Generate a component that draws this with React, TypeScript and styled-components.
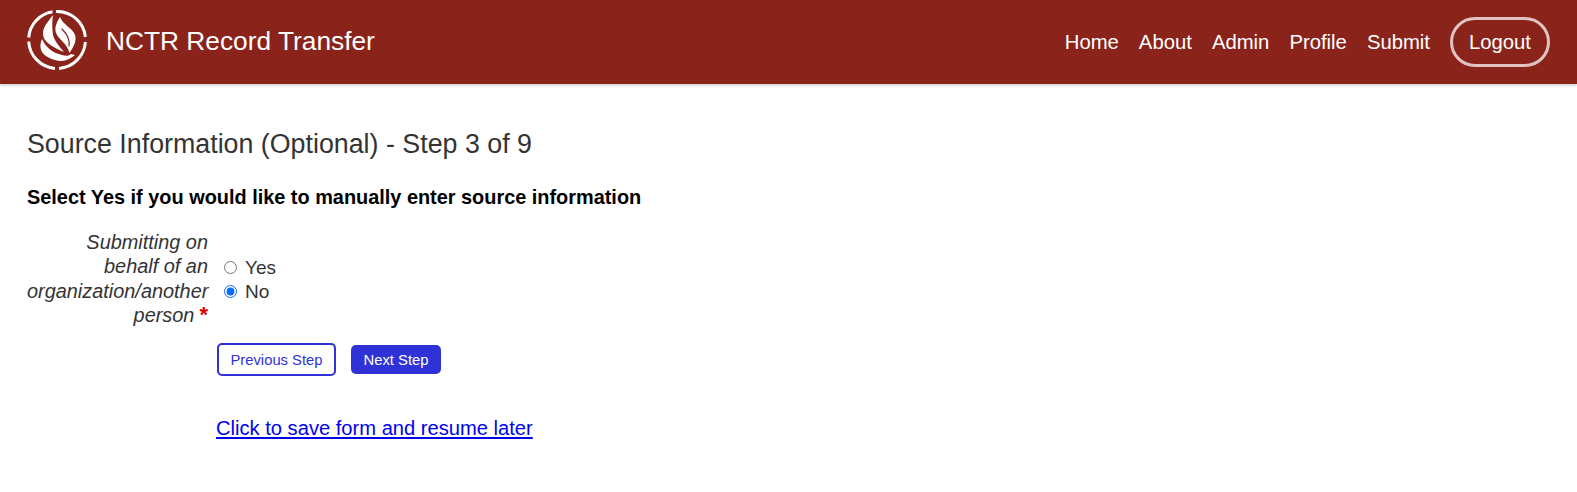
import React from "react";
import styled, { createGlobalStyle } from "styled-components";

const Global = createGlobalStyle`
  html, body { margin: 0; padding: 0; background: #fff; }
  body { font-family: "Liberation Sans", Arial, sans-serif; color: #212529; }
`;

const Header = styled.header`
  height: 84px;
  background: #8a231a;
  box-shadow: 0 1px 3px rgba(0, 0, 0, 0.25);
  display: flex;
  align-items: center;
  justify-content: space-between;
  padding: 0 27px;
`;

const Brand = styled.a`
  display: flex;
  align-items: center;
  gap: 19px;
  padding-bottom: 2px;
  color: #fff;
  font-size: 26.3px;
  text-decoration: none;
`;

const LogoMark = styled.svg`
  display: block;
  flex: none;
  margin-bottom: 2px;
`;

const Nav = styled.nav`
  display: flex;
  align-items: center;
  gap: 20px;
`;

const NavLink = styled.a`
  color: #fff;
  font-size: 20.3px;
  text-decoration: none;
`;

const LogoutLink = styled(NavLink)`
  display: block;
  width: 100px;
  height: 50px;
  line-height: 45px;
  text-align: center;
  box-sizing: border-box;
  border: 3px solid #dfc4c1;
  border-radius: 25px;
`;

const Main = styled.main`
  padding: 45px 27px 0;
`;

const Title = styled.h2`
  margin: 0 0 26px;
  font-size: 26.8px;
  line-height: 31px;
  font-weight: 400;
  color: #333;
`;

const Lead = styled.p`
  margin: 0 0 21px;
  font-size: 19.9px;
  line-height: 23px;
  font-weight: 700;
  color: #000;
`;

const FormRow = styled.div`
  display: grid;
  grid-template-columns: 181px 1fr;
  column-gap: 16px;
  align-items: center;
`;

const FieldLabel = styled.label`
  font-size: 19.9px;
  line-height: 24.3px;
  font-style: italic;
  text-align: right;
  color: #333;
`;

const Required = styled.span`
  display: inline-block;
  margin-left: 5px;
  font-size: 22px;
  line-height: 20px;
  color: #e00000;
  font-weight: 700;
  font-style: normal;
`;

const Options = styled.div`
  display: flex;
  flex-direction: column;
  padding-top: 2px;
`;

const Option = styled.label`
  display: flex;
  align-items: center;
  gap: 8px;
  font-size: 19px;
  line-height: 23.5px;
  color: #333;
`;

const Radio = styled.input`
  margin: 0;
  width: 13px;
  height: 13px;
  accent-color: #0a6cff;
`;

const Actions = styled.div`
  display: flex;
  flex-direction: column;
  align-items: flex-start;
  margin: 16px 0 0 190px;
`;

const Buttons = styled.div`
  display: flex;
  align-items: center;
  gap: 15px;
`;

const Button = styled.button<{ $primary?: boolean }>`
  font-family: inherit;
  font-size: 14.8px;
  border-radius: 5px;
  box-sizing: border-box;
  padding: 0;
  color: ${(p) => (p.$primary ? "#fff" : "#2f32d6")};
  background: ${(p) => (p.$primary ? "#2f32d6" : "#fff")};
  border: ${(p) => (p.$primary ? "none" : "2px solid #2f32d6")};
  width: ${(p) => (p.$primary ? "90px" : "119px")};
  height: ${(p) => (p.$primary ? "29px" : "33px")};
`;

const SaveLink = styled.a`
  margin: 40px 0 0 -1px;
  font-size: 20.15px;
  line-height: 24px;
  color: #0000ee;
  text-decoration: underline;
`;

const Logo = () => (
  <LogoMark width="60" height="60" viewBox="0 0 60 60" fill="none" aria-hidden="true">
    <g stroke="#fff" strokeWidth="3">
      <path d="M1.7 27.5A28.5 28.5 0 0 1 25.5 1.8" />
      <path d="M29 1.5A28.5 28.5 0 0 1 58.4 27" />
      <path d="M58.4 32A28.5 28.5 0 0 1 32 58.4" />
      <path d="M28 58.4A28.5 28.5 0 0 1 1.7 31.5" />
    </g>
    <g fill="#fff">
      <path d="M26 5C21 12 14 18 16.5 27C18.5 33 27 38 37 42C32 36 27.5 31 26 25C25 18 25 11 26 5Z" />
      <path d="M33 7C29 13 27.5 18 29 23C32 30 40 33 42.5 43C46.5 37 50 31 48 25C45.5 18 36 15 33 7Z" />
      <path d="M15 29C11.5 37 14 44 21.5 47.5C27 50.5 33 51.5 38 50.5C42 49.5 45 47.5 48 45L44 44C41 46.5 38 46 35 45C26.5 43 19 38 15 29Z" />
    </g>
    <path stroke="#8a231a" strokeWidth="1.2" strokeLinecap="round" d="M35 19C40 24 43 30 42 36" />
  </LogoMark>
);

export default function App() {
  return (
    <>
      <Global />
      <Header>
        <Brand href="#">
          <Logo />
          NCTR Record Transfer
        </Brand>
        <Nav>
          <NavLink href="#">Home</NavLink>
          <NavLink href="#">About</NavLink>
          <NavLink href="#">Admin</NavLink>
          <NavLink href="#">Profile</NavLink>
          <NavLink href="#">Submit</NavLink>
          <LogoutLink href="#">Logout</LogoutLink>
        </Nav>
      </Header>
      <Main>
        <Title>Source Information (Optional) - Step 3 of 9</Title>
        <Lead>Select Yes if you would like to manually enter source information</Lead>
        <FormRow>
          <FieldLabel>
            Submitting on
            <br />
            behalf of an
            <br />
            organization/another
            <br />
            person<Required>*</Required>
          </FieldLabel>
          <Options>
            <Option>
              <Radio type="radio" name="source" />
              Yes
            </Option>
            <Option>
              <Radio type="radio" name="source" defaultChecked />
              No
            </Option>
          </Options>
        </FormRow>
        <Actions>
          <Buttons>
            <Button type="button">Previous Step</Button>
            <Button type="button" $primary>
              Next Step
            </Button>
          </Buttons>
          <SaveLink href="#">Click to save form and resume later</SaveLink>
        </Actions>
      </Main>
    </>
  );
}
